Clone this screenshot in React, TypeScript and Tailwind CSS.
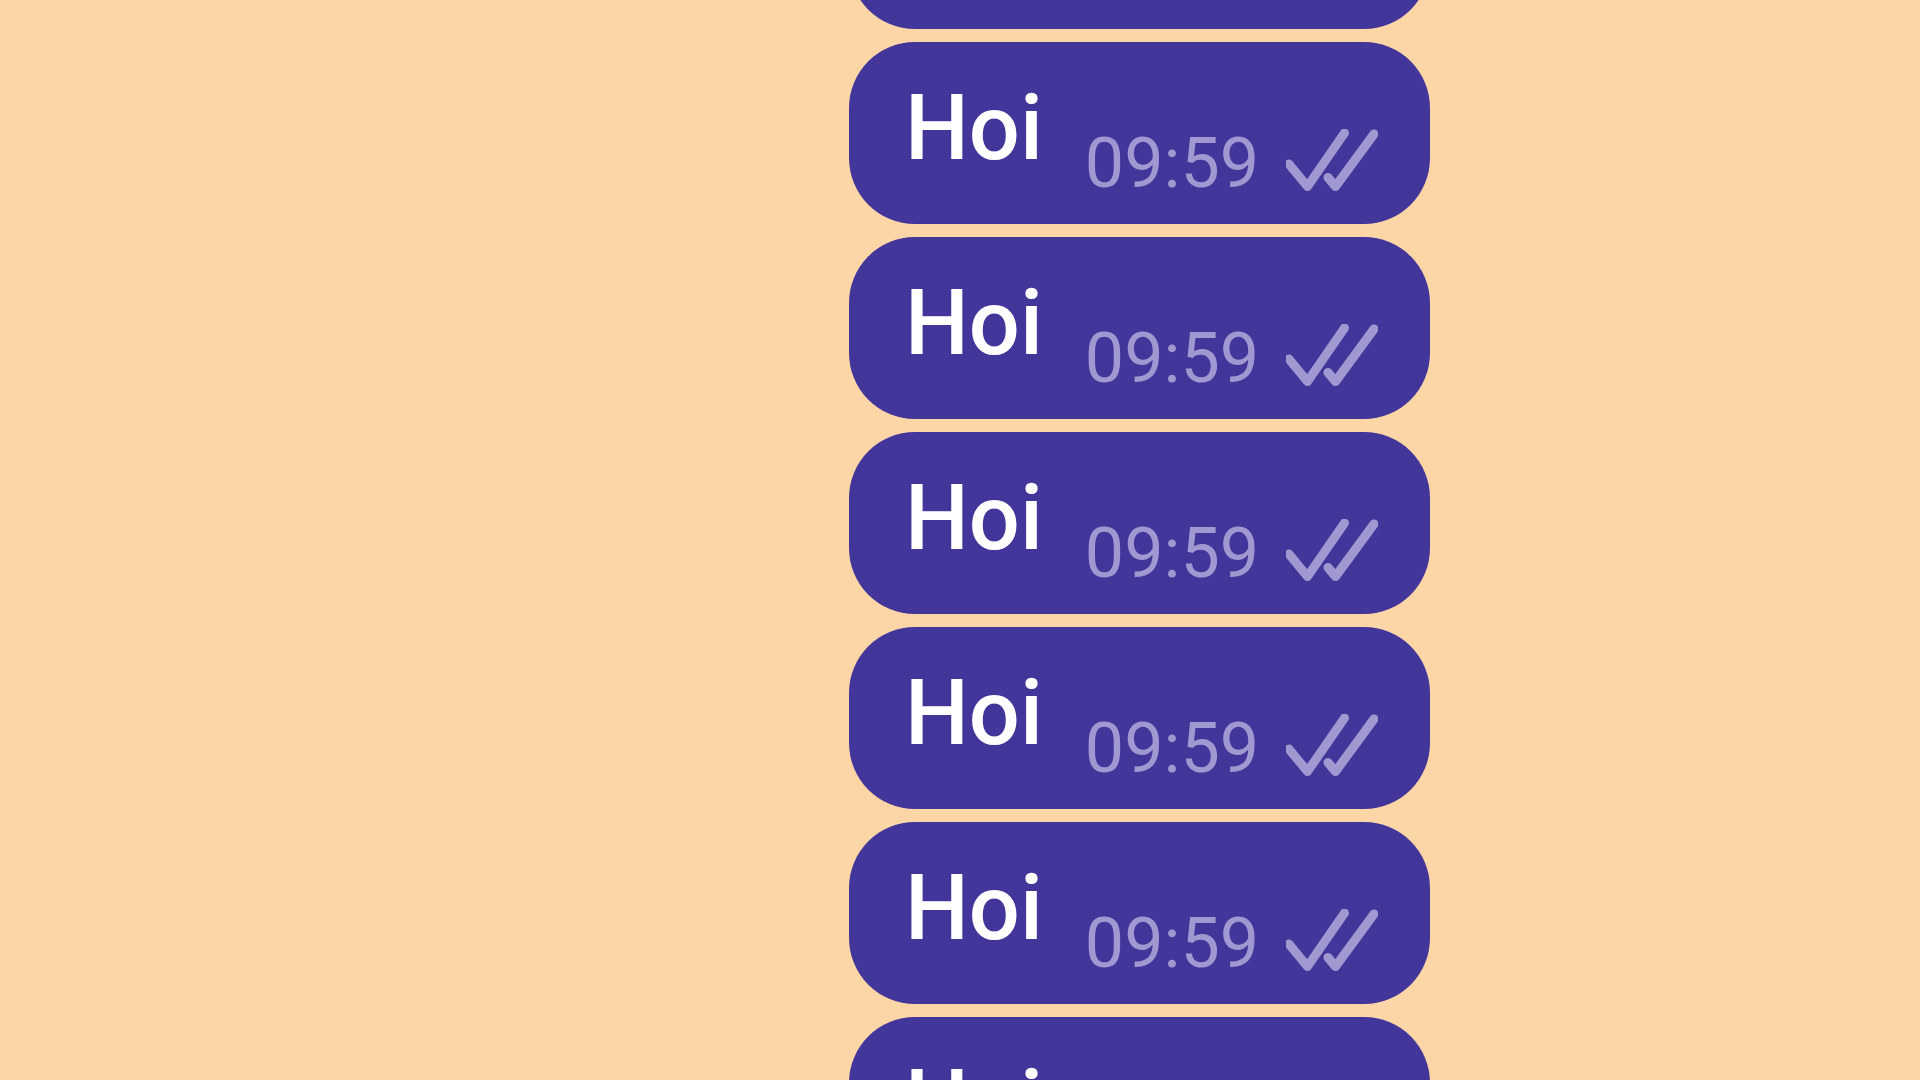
const messages = Array.from({ length: 7 }, () => ({ text: 'Hoi', time: '09:59' }));

function DoubleCheck() {
  return (
    <svg className="ml-[27px] mt-[1px] h-[62px] w-[92px] shrink-0" viewBox="0 0 92 62" fill="none">
      <path d="M3 35 L21.5 57.5 L58.5 4" stroke="#a099d1" strokeWidth="9" strokeLinecap="round" strokeLinejoin="round" />
      <path d="M42 48.5 L49.5 57.5 L88 5" stroke="#a099d1" strokeWidth="9" strokeLinecap="round" strokeLinejoin="round" />
    </svg>
  );
}

function Bubble({ text, time }: { text: string; time: string }) {
  return (
    <div className="flex h-[182px] w-[581px] shrink-0 items-start rounded-[66px] bg-[#43369a] pl-[56px] pt-[42px]">
      <span className="text-[90px] font-medium leading-none text-white">{text}</span>
      <div className="ml-[42px] mt-[44px] flex items-start">
        <span className="text-[70px] leading-none text-[#a099d1]">{time}</span>
        <DoubleCheck />
      </div>
    </div>
  );
}

export default function App() {
  return (
    <div className="h-[1080px] w-[1920px] overflow-hidden bg-[#fdd6a8] font-['Roboto',sans-serif]">
      <div className="mt-[-153px] flex flex-col gap-[13px] pl-[849px]">
        {messages.map((m, i) => (
          <Bubble key={i} text={m.text} time={m.time} />
        ))}
      </div>
    </div>
  );
}
